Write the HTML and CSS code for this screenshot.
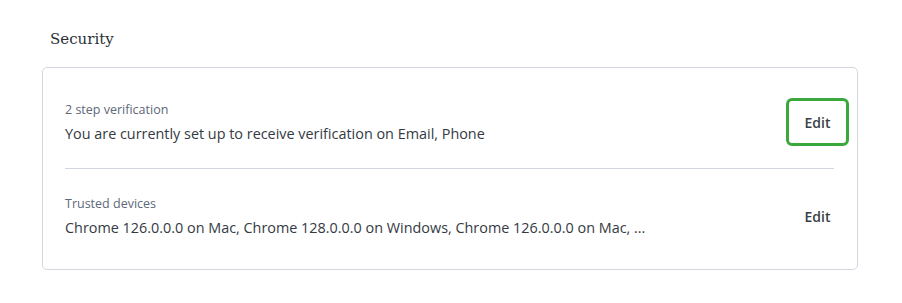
FILE: index.html
```html
<!DOCTYPE html>
<html>
<head>
<meta charset="utf-8">
<link rel="stylesheet" href="styles.css">
</head>
<body>
<section class="page">
  <h2 class="title">Security</h2>
  <div class="card">
    <div class="row">
      <div class="info">
        <div class="label">2 step verification</div>
        <div class="value">You are currently set up to receive verification on Email, Phone</div>
      </div>
      <button class="edit focused">Edit</button>
    </div>
    <div class="row">
      <div class="info">
        <div class="label">Trusted devices</div>
        <div class="value">Chrome 126.0.0.0 on Mac, Chrome 128.0.0.0 on Windows, Chrome 126.0.0.0 on Mac, ...</div>
      </div>
      <button class="edit">Edit</button>
    </div>
  </div>
</section>
</body>
</html>
```
FILE: styles.css
```css
html, body {
  margin: 0;
  background: #ffffff;
}
* {
  box-sizing: border-box;
}
.page {
  padding: 28px 44px 0 42px;
  font-family: "Open Sans", sans-serif;
}
.title {
  margin: 0 0 17px 8px;
  font-family: "DejaVu Serif", serif;
  font-weight: 400;
  font-size: 15px;
  line-height: 22px;
  color: #2a2f38;
}
.card {
  width: 816px;
  border: 1px solid #d3d8e0;
  border-radius: 5px;
  padding: 6px 23px 7px 22px;
}
.row {
  display: flex;
  align-items: center;
  justify-content: space-between;
  padding: 24px 0 22px;
}
.row + .row {
  border-top: 1px solid #d3d8e0;
  padding-top: 23px;
}
.label {
  font-size: 12.5px;
  line-height: 18px;
  color: #5d6879;
}
.value {
  margin-top: 5px;
  font-size: 14.4px;
  line-height: 20px;
  color: #343a43;
}
.edit {
  margin-right: -15px;
  width: 63px;
  height: 48px;
  border: 2px solid transparent;
  border-radius: 6px;
  background: #ffffff;
  font-family: "Open Sans", sans-serif;
  font-size: 14px;
  font-weight: 600;
  color: #3a3f47;
  cursor: pointer;
}
.edit.focused {
  border: 3px solid #3aa83c;
}
```
